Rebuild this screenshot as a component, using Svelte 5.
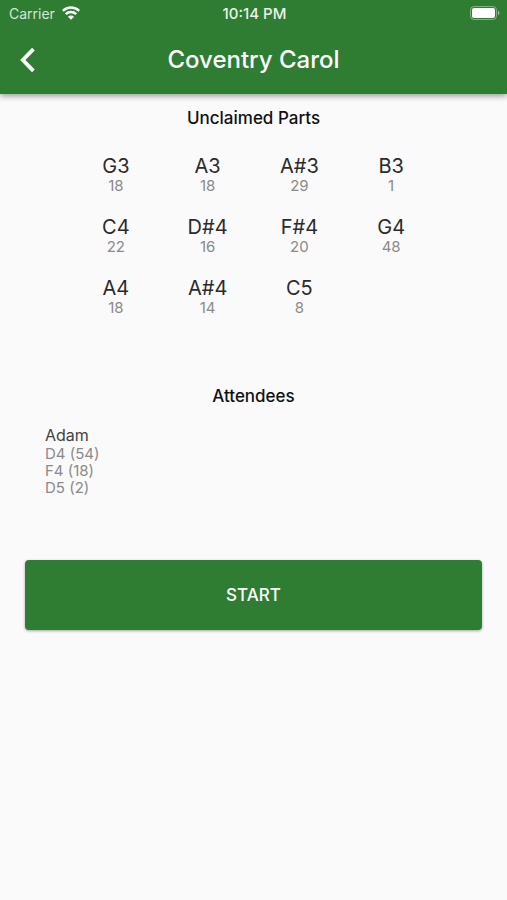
<script>
  let {
    title = "Coventry Carol",
    unclaimed = [
      { note: "G3", count: 18 },
      { note: "A3", count: 18 },
      { note: "A#3", count: 29 },
      { note: "B3", count: 1 },
      { note: "C4", count: 22 },
      { note: "D#4", count: 16 },
      { note: "F#4", count: 20 },
      { note: "G4", count: 48 },
      { note: "A4", count: 18 },
      { note: "A#4", count: 14 },
      { note: "C5", count: 8 },
    ],
    attendees = [
      {
        name: "Adam",
        parts: [
          { note: "D4", count: 54 },
          { note: "F4", count: 18 },
          { note: "D5", count: 2 },
        ],
      },
    ],
  } = $props();

  let started = $state(false);
</script>

<header class="app-bar">
  <div class="status">
    <div class="carrier">
      <span>Carrier</span>
      <svg width="18" height="14" viewBox="0 0 18 14" aria-hidden="true">
        <g fill="none" stroke="#fff" stroke-width="2.5">
          <path d="M0.8 4.9a11.6 11.6 0 0 1 16.4 0" />
          <path d="M3.8 8.2a7.4 7.4 0 0 1 10.4 0" />
        </g>
        <path d="M9 13.8L5.9 10.7a4.4 4.4 0 0 1 6.2 0z" fill="#fff" />
      </svg>
    </div>
    <time class="time">10:14 PM</time>
    <div class="battery">
      <svg width="30" height="14" viewBox="0 0 30 14" aria-hidden="true">
        <rect x="0.5" y="0.5" width="26" height="13" rx="3.5" fill="none" stroke="#fff" stroke-opacity="0.4" />
        <rect x="2" y="2" width="23" height="10" rx="2" fill="#fff" />
        <path d="M28 4.8c1.9 0.6 1.9 3.8 0 4.4z" fill="#fff" fill-opacity="0.5" />
      </svg>
    </div>
  </div>

  <div class="toolbar">
    <button type="button" class="back" aria-label="Back">
      <svg width="16" height="26" viewBox="0 0 16 26" aria-hidden="true">
        <path d="M13.4 2.2L2.8 13l10.6 10.8" fill="none" stroke="#fff" stroke-width="3.8" />
      </svg>
    </button>
    <h1 class="title">{title}</h1>
  </div>
</header>

<main class="content">
  <section class="unclaimed">
    <h2 class="heading">Unclaimed Parts</h2>
    <ul class="parts">
      {#each unclaimed as part}
        <li class="part">
          <span class="note">{part.note}</span>
          <span class="count">{part.count}</span>
        </li>
      {/each}
    </ul>
  </section>

  <section class="attendees">
    <h2 class="heading">Attendees</h2>
    <ul class="people">
      {#each attendees as person}
        <li class="person">
          <span class="name">{person.name}</span>
          {#each person.parts as part}
            <span class="held">{part.note} ({part.count})</span>
          {/each}
        </li>
      {/each}
    </ul>
  </section>

  <button type="button" class="start" disabled={started} onclick={() => (started = true)}>START</button>
</main>

<style>
  :global(body) {
    margin: 0;
    background: #fafafa;
    color: #2b2b2b;
    font-family: Inter, "Liberation Sans", sans-serif;
  }

  h1,
  h2,
  ul {
    margin: 0;
    padding: 0;
    list-style: none;
  }

  svg {
    display: block;
  }

  .app-bar {
    background: #2e7d32;
    color: #fff;
    box-shadow: 0 2px 6px rgba(0, 0, 0, 0.4);
  }

  .status {
    display: grid;
    grid-template-columns: 1fr auto 1fr;
    align-items: center;
    height: 26px;
    padding: 0 7px 0 9px;
    font-size: 14px;
  }

  .carrier {
    display: flex;
    align-items: center;
    gap: 7px;
    color: #d5e5d6;
  }

  .time {
    font-size: 15px;
    font-weight: 500;
    color: #eaf2ea;
  }

  .battery {
    justify-self: end;
  }

  .toolbar {
    display: grid;
    grid-template-columns: 68px 1fr 68px;
    align-items: center;
    height: 68px;
  }

  .back {
    display: flex;
    align-items: center;
    height: 68px;
    padding: 0 20px;
    border: none;
    background: none;
    cursor: pointer;
  }

  .title {
    font-size: 24px;
    line-height: 30px;
    font-weight: 500;
    text-align: center;
  }

  .content {
    display: flex;
    flex-direction: column;
    padding: 14px 25px;
  }

  .heading {
    font-size: 17px;
    line-height: 20px;
    font-weight: 500;
    color: #111;
    text-align: center;
  }

  .parts {
    display: grid;
    grid-template-columns: repeat(4, 1fr);
    row-gap: 21px;
    padding: 26px 45px 0;
  }

  .part {
    display: flex;
    flex-direction: column;
    align-items: center;
  }

  .note {
    font-size: 20px;
    line-height: 24px;
  }

  .count {
    font-size: 15px;
    line-height: 16px;
    color: #8a8a8a;
  }

  .attendees {
    margin-top: 70px;
  }

  .people {
    padding: 19px 20px 0;
  }

  .person {
    display: flex;
    flex-direction: column;
  }

  .name {
    font-size: 16px;
    line-height: 20px;
    color: #424242;
  }

  .held {
    font-size: 15px;
    line-height: 17px;
    color: #8a8a8a;
  }

  .start {
    margin-top: 64px;
    height: 70px;
    border: none;
    border-radius: 4px;
    background: #2e7d32;
    color: #fff;
    font-family: inherit;
    font-size: 17px;
    font-weight: 500;
    box-shadow: 0 1px 3px rgba(0, 0, 0, 0.35);
    cursor: pointer;
  }
</style>
